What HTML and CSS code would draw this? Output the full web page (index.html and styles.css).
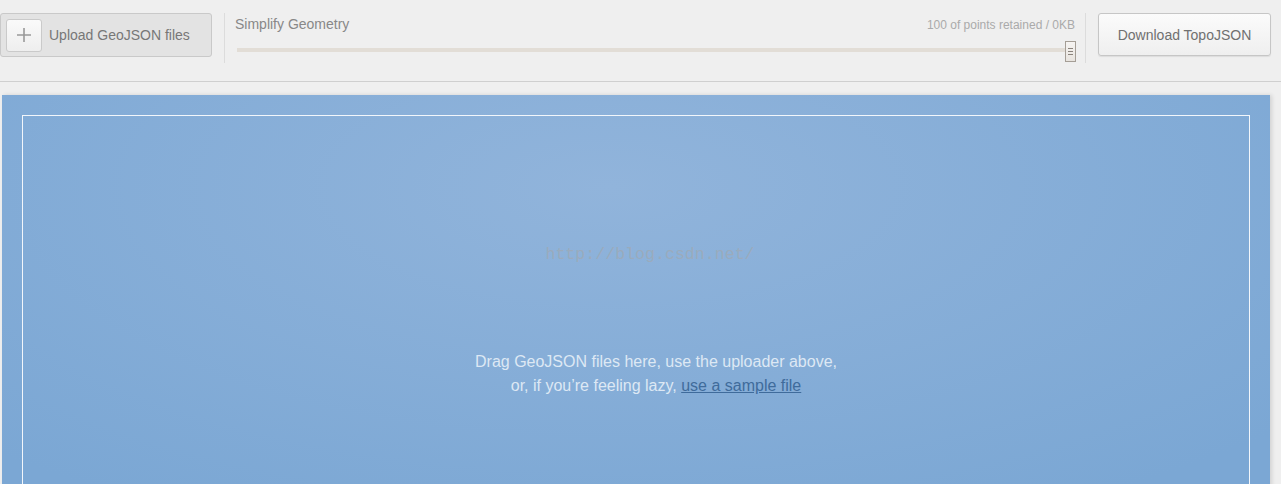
FILE: index.html
```html
<!DOCTYPE html>
<html lang="en">
<head>
    <meta charset="UTF-8">
    <meta name="viewport" content="width=device-width, initial-scale=1.0">
    <title>GeoJSON to TopoJSON</title>

    <link rel="stylesheet" href="styles.css">
</head>
<body>

    <div class="toolbar">
        <label class="upload">
            <span class="upload-plus">
                <svg width="16" height="16" viewBox="0 0 16 16">
                    <path d="M8 1v14M1 8h14" stroke="#999" stroke-width="1.6" fill="none"/>
                </svg>
            </span>
            <span class="upload-text">Upload GeoJSON files</span>
        </label>

        <div class="sep"></div>

        <div class="simplify">
            <div class="simplify-head">
                <span class="simplify-title">Simplify Geometry</span>
                <span class="simplify-info">100 of points retained / 0KB</span>
            </div>
            <div class="slider">
                <div class="slider-track"></div>
                <div class="slider-handle">
                    <i></i><i></i><i></i>
                </div>
            </div>
        </div>

        <div class="sep sep-right"></div>

        <button class="download">Download TopoJSON</button>
    </div>

    <div class="dropzone">
        <div class="dropzone-inner">
            <div class="mark">http://blog.csdn.net/</div>
            <p class="hint">
                Drag GeoJSON files here, use the uploader above,<br>
                or, if you’re feeling lazy, <a href="#">use a sample file</a>
            </p>
        </div>
    </div>

</body>
</html>
```

FILE: styles.css
```css
body{
    margin: 0;
    background-color: #efefef;
    font-family: "Liberation Sans", Arial, sans-serif;
    overflow: hidden;
}

.toolbar{
    display: flex;
    align-items: flex-start;
    height: 82px;
    padding-top: 13px;
    box-sizing: border-box;
    border-bottom: 1px solid #cfcfcf;
}

.upload{
    display: flex;
    align-items: center;
    width: 212px;
    height: 44px;
    box-sizing: border-box;
    border: 1px solid #c9c9c9;
    border-radius: 3px;
    background-color: #e3e3e3;
    padding-left: 5px;
}

.upload-plus{
    display: flex;
    align-items: center;
    justify-content: center;
    width: 36px;
    height: 33px;
    box-sizing: border-box;
    border: 1px solid #cacaca;
    border-radius: 3px;
    background: linear-gradient(#fafafa, #eeeeee);
}

.upload-text{
    margin-left: 7px;
    font-size: 14px;
    color: #777;
}

.sep{
    width: 1px;
    height: 50px;
    background-color: #dcdcdc;
    margin-left: 12px;
}

.sep-right{
    margin-left: 9px;
}

.simplify{
    width: 841px;
    margin-left: 10px;
}

.simplify-head{
    display: flex;
    justify-content: space-between;
    align-items: baseline;
    padding-top: 3px;
}

.simplify-title{
    font-size: 14px;
    color: #888;
}

.simplify-info{
    font-size: 12px;
    color: #aaa;
    margin-right: 1px;
}

.slider{
    position: relative;
    height: 22px;
    margin-top: 9px;
}

.slider-track{
    position: absolute;
    left: 2px;
    right: 8px;
    top: 7px;
    height: 4px;
    background-color: #e2ddd6;
}

.slider-handle{
    position: absolute;
    right: 0;
    top: 0;
    width: 11px;
    height: 21px;
    box-sizing: border-box;
    border: 1px solid #a59e96;
    background: linear-gradient(#f6f4f2, #e8e4df);
    display: flex;
    flex-direction: column;
    align-items: center;
    justify-content: center;
    gap: 2px;
}

.slider-handle i{
    display: block;
    width: 5px;
    height: 1px;
    background-color: #8a837c;
}

.download{
    margin-left: 12px;
    width: 173px;
    height: 43px;
    border: 1px solid #c6c6c6;
    border-radius: 3px;
    background: linear-gradient(#fbfbfb, #efefef);
    box-shadow: 0 1px 1px rgba(0, 0, 0, 0.08);
    font-family: "Liberation Sans", Arial, sans-serif;
    font-size: 14px;
    color: #707070;
}

.dropzone{
    margin: 13px 11px 0 2px;
    height: 420px;
    padding: 20px;
    background: radial-gradient(ellipse 70% 80% at 48% 20%, #91b4db, #7ba7d4);
    box-shadow: 2px 0 4px rgba(0, 0, 0, 0.12);
}

.dropzone-inner{
    height: 100%;
    border: 1px solid #f2f6fb;
    border-bottom: none;
    display: flex;
    flex-direction: column;
    align-items: center;
}

.mark{
    margin-top: 129px;
    padding-left: 28px;
    font-family: "Liberation Mono", "Courier New", monospace;
    font-size: 16.6px;
    color: #9aabbd;
}

.hint{
    margin: 86px 0 0;
    padding-left: 40px;
    text-align: center;
    font-size: 16px;
    line-height: 24px;
    color: #dde8f4;
}

.hint a{
    color: #3f6b9b;
}
```
